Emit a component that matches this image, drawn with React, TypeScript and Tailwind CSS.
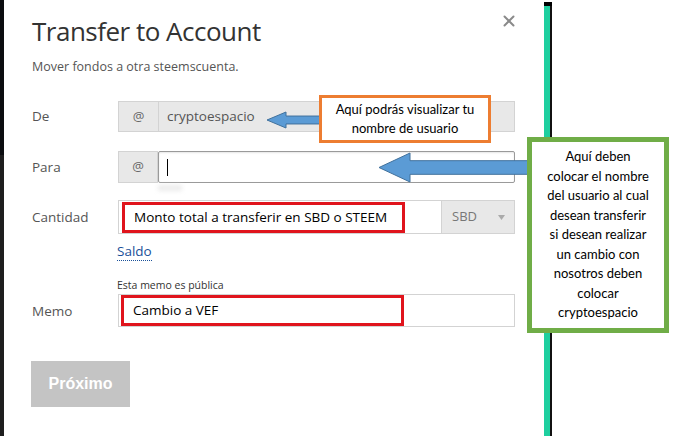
import { X } from 'lucide-react';

const sans = { fontFamily: '"Open Sans", "Noto Sans", sans-serif' };
const calibri = { fontFamily: 'Lato, "Open Sans", sans-serif' };

function Arrow({ w, h, head }: { w: number; h: number; head: number }) {
  const t = h * 0.28;
  return (
    <svg width={w} height={h} viewBox={`0 0 ${w} ${h}`}>
      <polygon
        points={`1,${h / 2} ${head},1 ${head},${t} ${w - 1},${t} ${w - 1},${h - t} ${head},${h - t} ${head},${h - 1}`}
        fill="#5b9bd5"
        stroke="#41719c"
        strokeWidth="1"
      />
    </svg>
  );
}

export default function App() {
  return (
    <div className="relative flex h-[441px] w-[677px] overflow-hidden bg-white" style={sans}>
      {/* dark page edge */}
      <div className="flex w-[4px] flex-col">
        <div className="h-[155px] bg-[#0b0d10]" />
        <div className="flex-1 bg-[#1e1e1e]" />
        <div className="h-[5px] bg-white" />
      </div>

      {/* modal */}
      <div className="relative w-[540px] pl-[28px] pt-[14px]">
        <button className="absolute right-[26px] top-[12px] text-[#8a8a8a]">
          <X size={18} strokeWidth={2.6} />
        </button>
        <h1 className="text-[26px] leading-[34px] tracking-[-0.5px] text-[#333]">Transfer to Account</h1>
        <p className="mt-[10px] text-[12.5px] leading-[18px] text-[#555]">Mover fondos a otra steemscuenta.</p>

        <div className="mt-[25px] flex items-center">
          <div className="w-[86px] text-[13.5px] text-[#555]">De</div>
          <div className="flex h-[31px] w-[397px] border border-[#d3d3d3] bg-[#e8e8e8]">
            <div className="flex w-[40px] items-center justify-center border-r border-[#d3d3d3] text-[13px] text-[#666]">@</div>
            <div className="flex items-center pl-[8px] text-[13.5px] text-[#555]">cryptoespacio</div>
          </div>
        </div>

        <div className="mt-[19px] flex items-center">
          <div className="w-[86px] text-[13.5px] text-[#555]">Para</div>
          <div className="relative flex h-[32px] w-[397px]">
            <div className="flex w-[40px] items-center justify-center border border-[#d3d3d3] bg-[#e8e8e8] text-[13px] text-[#666]">@</div>
            <div className="flex flex-1 items-center rounded-[2px] border border-[#9a9a9a] bg-white pl-[8px] shadow-[inset_0_1px_2px_rgba(0,0,0,0.1)]">
              <div className="h-[17px] w-px bg-black" />
            </div>
            <div className="absolute left-[40px] top-[34px] h-[6px] w-[24px] bg-[#ececec] blur-[2px]" />
          </div>
        </div>

        <div className="mt-[17px] flex items-center">
          <div className="w-[86px] text-[13.5px] text-[#555]">Cantidad</div>
          <div className="flex h-[34px] w-[397px]">
            <div className="flex w-[324px] items-center border border-[#d3d3d3] bg-white pl-[3px]">
              <div className="flex h-[31px] w-[283px] items-center border-[3px] border-[#e0141c] pl-[9px] text-[13.5px] text-black">
                Monto total a transferir en SBD o STEEM
              </div>
            </div>
            <div className="flex flex-1 items-center justify-between border border-l-0 border-[#d3d3d3] bg-[#e8e8e8] pl-[10px] pr-[9px] text-[13px] text-[#777]">
              <span>SBD</span>
              <svg width="7" height="5" viewBox="0 0 7 5"><polygon points="0,0 7,0 3.5,5" fill="#aaa" /></svg>
            </div>
          </div>
        </div>

        <div className="ml-[85px] mt-[8px] inline-block border-b border-dotted border-[#1a5099] text-[13.5px] leading-[18px] text-[#1a5099]">Saldo</div>

        <div className="ml-[85px] mt-[16px] text-[10.5px] leading-[14px] text-[#333]">Esta memo es pública</div>
        <div className="mt-[2px] flex items-center">
          <div className="w-[86px] pt-[2px] text-[13.5px] text-[#555]">Memo</div>
          <div className="flex h-[33px] w-[397px] items-center border border-[#d3d3d3] bg-white pl-[2px]">
            <div className="flex h-[31px] w-[283px] items-center border-[3px] border-[#e0141c] pl-[9px] text-[13.5px] text-black">
              Cambio a VEF
            </div>
          </div>
        </div>

        <button
          className="mt-[34px] h-[46px] w-[99px] -ml-px bg-[#c4c4c4] text-[16px] font-bold text-white"
          style={{ fontFamily: '"Liberation Sans", Arial, sans-serif' }}
        >
          Próximo
        </button>
      </div>

      {/* teal bar behind page */}
      <div className="mt-[2px] mb-[5px] flex w-[8px] flex-col">
        <div className="h-[4px] bg-black" />
        <div className="flex flex-1">
          <div className="flex-1 bg-[#1ecf9f]" />
          <div className="w-[2px] bg-[#111]" />
        </div>
      </div>

      {/* annotations */}
      <div className="absolute left-[266px] top-[111px]">
        <Arrow w={56} h={18} head={20} />
      </div>
      <div
        className="absolute left-[319px] top-[95px] flex h-[48px] w-[172px] flex-col items-center justify-center border-[3px] border-[#ed7d31] bg-white text-[13px] leading-[19px] text-black"
        style={calibri}
      >
        <span>Aquí podrás visualizar tu</span>
        <span>nombre de usuario</span>
      </div>

      <div className="absolute left-[378px] top-[152px]">
        <Arrow w={158} h={31} head={32} />
      </div>
      <div
        className="absolute left-[527px] top-[137px] flex h-[196px] w-[142px] flex-col items-center justify-center border-[5px] border-[#70ad47] bg-white text-center text-[13px] leading-[19.5px] text-black"
        style={calibri}
      >
        <span>Aquí deben</span>
        <span>colocar el nombre</span>
        <span>del usuario al cual</span>
        <span>desean transferir</span>
        <span>si desean realizar</span>
        <span>un cambio con</span>
        <span>nosotros deben</span>
        <span>colocar</span>
        <span>cryptoespacio</span>
      </div>
    </div>
  );
}
